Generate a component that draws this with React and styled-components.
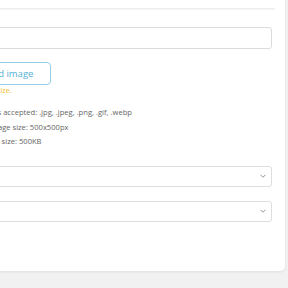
import React from 'react';
import styled, { createGlobalStyle } from 'styled-components';

const GlobalStyle = createGlobalStyle`
  html, body {
    margin: 0;
    padding: 0;
    background: #f1f1f1;
    font-family: "Open Sans", "Liberation Sans", sans-serif;
    overflow: hidden;
  }
`;

const Page = styled.div`
  width: 288px;
  height: 288px;
  overflow: hidden;
`;

const Card = styled.div`
  margin-left: -62px;
  width: 347px;
  height: 271px;
  background: #fff;
  border-radius: 0 0 5px 0;
  box-shadow: 0 1px 3px rgba(0, 0, 0, 0.08);
  box-sizing: border-box;
  padding: 0 13px 0 22px;
  display: flex;
  flex-direction: column;
`;

const Header = styled.div`
  height: 8px;
  margin-right: -3px;
  border-bottom: 1px solid #ececec;
  box-shadow: 0 1px 1px rgba(0, 0, 0, 0.03);
`;

const Input = styled.div`
  margin-top: 18px;
  height: 22px;
  border: 1px solid #dcdcdc;
  border-radius: 3px;
  box-sizing: border-box;
`;

const UploadButton = styled.div`
  margin-top: 13px;
  align-self: flex-start;
  height: 23px;
  box-sizing: border-box;
  padding: 0 17px 0 11px;
  border: 1px solid #94cfe6;
  border-radius: 4px;
  display: flex;
  align-items: center;
  font-size: 9.5px;
  color: #54afd4;
  white-space: nowrap;
`;

const Hint = styled.div`
  margin-top: 1px;
  font-size: 7.3px;
  line-height: 9px;
  color: #f2c230;
  white-space: nowrap;
`;

const InfoList = styled.div`
  margin-top: 10px;
  padding-left: 12px;
  display: flex;
  flex-direction: column;
`;

const InfoLine = styled.div`
  font-size: 7.6px;
  line-height: 14.5px;
  color: #666;
  white-space: nowrap;
`;

const Select = styled.div`
  margin-top: ${({ $top }) => $top}px;
  height: 21px;
  border: 1px solid #dedede;
  border-radius: 3px;
  box-sizing: border-box;
  display: flex;
  align-items: center;
  justify-content: flex-end;
  padding-right: 5px;
  background: #fff;
`;

const Chevron = () => (
  <svg width="6" height="4" viewBox="0 0 6 4" fill="none">
    <path d="M0.5 0.75l2.5 2.5 2.5-2.5" stroke="#8a8a8a" strokeWidth="0.9" />
  </svg>
);

export default function App() {
  return (
    <Page>
      <GlobalStyle />
      <Card>
        <Header />
        <Input />
        <UploadButton>Upload image</UploadButton>
        <Hint>Suggested size.</Hint>
        <InfoList>
          <InfoLine>Formats accepted: .jpg, .jpeg, .png, .gif, .webp</InfoLine>
          <InfoLine>Max image size: 500x500px</InfoLine>
          <InfoLine>Max file size: 500KB</InfoLine>
        </InfoList>
        <Select $top={17}>
          <Chevron />
        </Select>
        <Select $top={14}>
          <Chevron />
        </Select>
      </Card>
    </Page>
  );
}
